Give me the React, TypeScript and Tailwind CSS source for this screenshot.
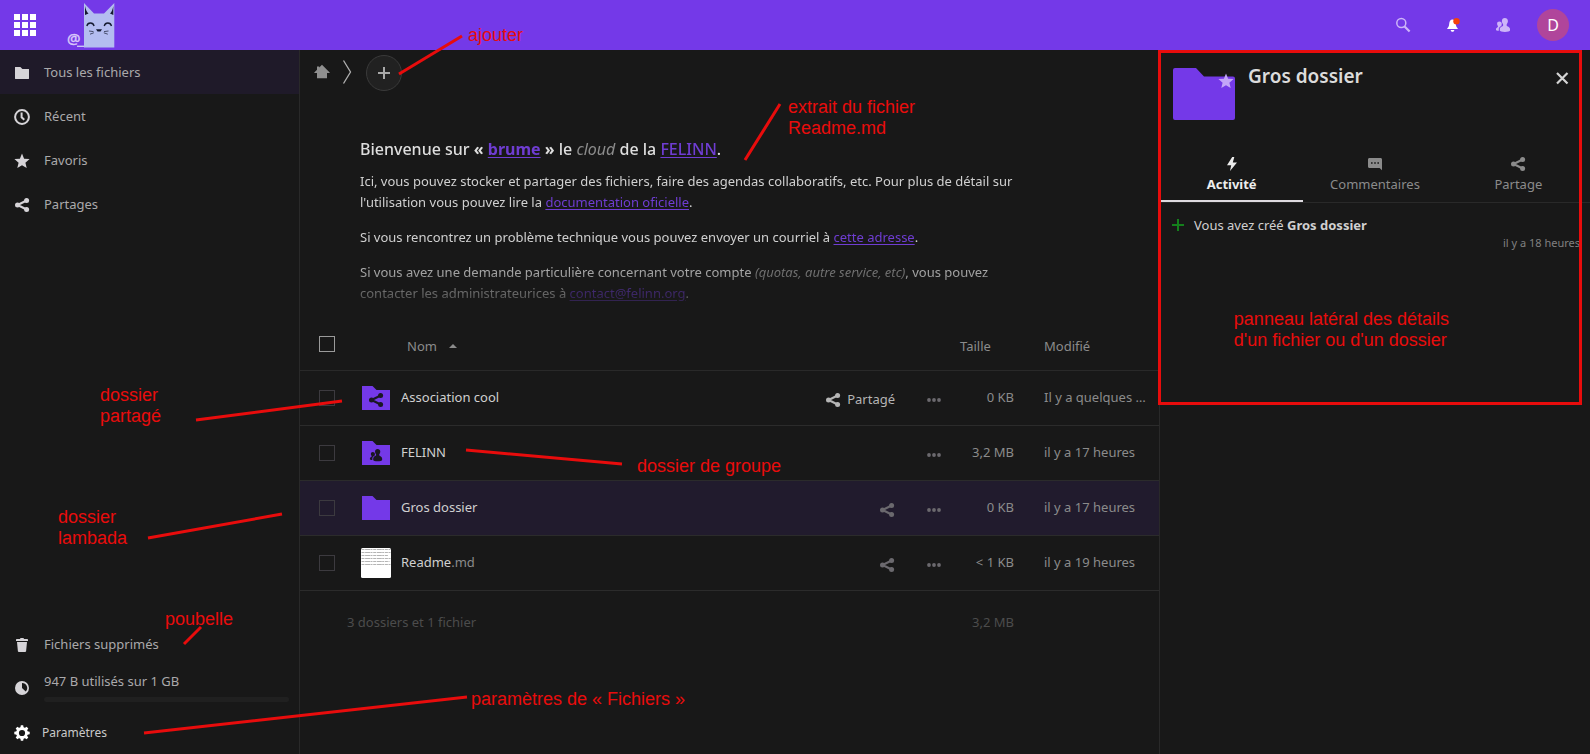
import type { ReactNode } from "react";

type IconProps = { className?: string };

function ShareIcon({ className = "size-4" }: IconProps) {
  return (
    <svg viewBox="0 0 16 16" className={className} fill="currentColor" aria-hidden="true">
      <path d="M12.6 3.4 3.6 8l9 4.6" fill="none" stroke="currentColor" strokeWidth="2.2" />
      <circle cx="12.6" cy="3.400" r="2.500" />
      <circle cx="3.500" cy="8" r="2.500" />
      <circle cx="12.6" cy="12.600" r="2.500" />
    </svg>
  );
}

function StarIcon({ className = "size-4" }: IconProps) {
  return (
    <svg viewBox="0 0 16 16" className={className} fill="currentColor" aria-hidden="true">
      <path d="m8 .6 2.1 5.100 5.500.4-4.200 3.600 1.300 5.400L8 12.200l-4.700 2.900 1.300-5.400L.4 6.100l5.500-.4z" />
    </svg>
  );
}

function FolderSmallIcon({ className = "size-4" }: IconProps) {
  return (
    <svg viewBox="0 0 16 16" className={className} fill="currentColor" aria-hidden="true">
      <path d="M1.400 2h5l2 2h6.200c.3 0 .4.2.4.4v9.200c0 .2-.1.4-.4.4H1.400c-.2 0-.4-.2-.4-.4V2.400c0-.2.2-.4.4-.4z" />
    </svg>
  );
}

function ClockIcon({ className = "size-4" }: IconProps) {
  return (
    <svg viewBox="0 0 16 16" className={className} fill="none" stroke="currentColor" aria-hidden="true">
      <circle cx="8" cy="8" r="6.900" strokeWidth="2" />
      <path d="M7.600 3.600v4.600l2.700 2.500" strokeWidth="2" />
    </svg>
  );
}

function TrashIcon({ className = "size-4" }: IconProps) {
  return (
    <svg viewBox="0 0 16 16" className={className} fill="currentColor" aria-hidden="true">
      <path d="M6.500 1 6 2H3c-.6 0-1 .4-1 1v1h12V3c0-.6-.4-1-1-1h-3l-.5-1zM3 5l.9 9.200c.1.500.5.800 1 .8h6.200c.5 0 .9-.3 1-.8L13 5z" />
    </svg>
  );
}

function QuotaIcon({ className = "size-4" }: IconProps) {
  return (
    <svg viewBox="0 0 16 16" className={className} fill="currentColor" aria-hidden="true">
      <path
        fillRule="evenodd"
        d="M8 1a7 7 0 1 0 0 14A7 7 0 0 0 8 1zm0 1.900A5.100 5.100 0 0 1 11.700 11.600L8 8z"
      />
    </svg>
  );
}

const gearTeeth = [0, 45, 90, 135, 180, 225, 270, 315];

function GearIcon({ className = "size-4" }: IconProps) {
  return (
    <svg viewBox="0 0 16 16" className={className} fill="currentColor" aria-hidden="true">
      <circle cx="8" cy="8" r="4.500" fill="none" stroke="currentColor" strokeWidth="2.800" />
      {gearTeeth.map((angle) => (
        <path key={angle} d="M6.300 3 6.800.3h2.400L9.700 3z" transform={`rotate(${angle} 8 8)`} />
      ))}
    </svg>
  );
}

function HomeIcon({ className = "size-4" }: IconProps) {
  return (
    <svg viewBox="0 0 16 16" className={className} fill="currentColor" aria-hidden="true">
      <path d="M8 .8 5.200 3.600V2.400H3v3.400L.3 8.600V9H3v5.200h10V9h2.700v-.4z" />
    </svg>
  );
}

function PeopleIcon({ className = "size-4" }: IconProps) {
  return (
    <svg viewBox="0 0 16 16" className={className} fill="currentColor" aria-hidden="true">
      <path d="M9.800 1C8 1 6.900 2.300 6.900 4.100c0 1.200.5 2.400 1.200 3.100v1.500c-.3.500-3.300 1-3.300 3.300v1.600c0 .9 2.400 1.400 5.100 1.400s5.100-.5 5.100-1.400V12c0-2.200-3-2.800-3.300-3.300V7.200c.7-.7 1.200-1.900 1.200-3.100C12.900 2.300 11.600 1 9.800 1z" />
      <path d="M4.300 4.600c-1.300 0-2.200.9-2.200 2.200 0 .8.300 1.600.8 2.100v1c-.2.400-1.900.8-1.900 2.100v.9c0 .5 1 .8 2.800.9V12c0-1.600 1.200-2.500 2.500-3.100.1-.5.500-1.200.5-2.100 0-1.300-1.200-2.200-2.500-2.200z" />
    </svg>
  );
}

function SearchIcon({ className = "size-4" }: IconProps) {
  return (
    <svg viewBox="0 0 16 16" className={className} fill="none" stroke="currentColor" aria-hidden="true">
      <circle cx="6.300" cy="6" r="4.500" strokeWidth="1.500" />
      <path d="m9.600 9.500 5 5" strokeWidth="2.200" />
    </svg>
  );
}

function BellIcon({ className = "size-4" }: IconProps) {
  return (
    <svg viewBox="0 0 16 16" className={className} aria-hidden="true">
      <path
        d="M7 2.600C5 3.100 4.500 4.800 4.200 6.800 4 9 3.600 9.600 3.200 10.200c-.5.600-1 1-1 1.800h10.600c0-.8-.5-1.200-1-1.800-.4-.6-.8-1.200-1-3.400-.2-2-.8-3.700-3-4.200zM5.700 12.900c0 .9.800 1.800 1.800 1.800s1.800-.9 1.800-1.800z"
        fill="#fff"
      />
      <circle cx="11.500" cy="4.200" r="3.200" fill="#f4410a" />
    </svg>
  );
}

function BoltIcon({ className = "size-4" }: IconProps) {
  return (
    <svg viewBox="0 0 16 16" className={className} fill="currentColor" aria-hidden="true">
      <path d="M8.200 1 3 9.300h4.200L6 15l7-8.400H8.800L10.300 1z" />
    </svg>
  );
}

function CommentIcon({ className = "size-4" }: IconProps) {
  return (
    <svg viewBox="0 0 16 16" className={className} fill="currentColor" aria-hidden="true">
      <path
        fillRule="evenodd"
        d="M2.500 2h11c.9 0 1.500.6 1.500 1.500v10.700L12.600 12H2.500C1.600 12 1 11.400 1 10.500v-7C1 2.600 1.600 2 2.500 2zM4 6.200v1.600h1.600V6.200zm3.200 0v1.600h1.600V6.200zm3.200 0v1.600H12V6.200z"
      />
    </svg>
  );
}

function PlusIcon({ className = "size-4" }: IconProps) {
  return (
    <svg viewBox="0 0 16 16" className={className} stroke="currentColor" strokeWidth="2" aria-hidden="true">
      <path d="M8 2v12M2 8h12" />
    </svg>
  );
}

function DotsIcon() {
  return (
    <svg viewBox="0 0 16 16" className="size-4" fill="currentColor" aria-hidden="true">
      <circle cx="3" cy="8" r="1.900" />
      <circle cx="8" cy="8" r="1.900" />
      <circle cx="13" cy="8" r="1.900" />
    </svg>
  );
}

function FolderThumb({ children }: { children?: ReactNode }) {
  return (
    <span className="grid size-8 shrink-0 place-items-center text-[#1a1722]">
      <svg viewBox="0 0 32 32" className="col-start-1 row-start-1 size-8" aria-hidden="true">
        <path d="M2 4h10.500l4 4H30v20H2z" fill="#7439e8" />
      </svg>
      <span className="col-start-1 row-start-1 mt-1">{children}</span>
    </span>
  );
}

function ReadmeThumb() {
  return (
    <svg viewBox="0 0 32 32" className="size-8 shrink-0" aria-hidden="true">
      <rect x="1" y="1" width="30" height="30" rx="1.500" fill="#fff" />
      <path
        d="M1.500 2.500h29M1.500 5.500h29M1.500 8.500h27M1.500 11.500h29M1.500 14.500h28M1.500 17.500h29"
        stroke="#b4b4b4"
        strokeWidth="1"
        strokeDasharray="3 .6 5 .4 2 .7"
      />
    </svg>
  );
}

function CatLogo() {
  return (
    <svg viewBox="0 0 52 50" className="h-[50px] w-[52px]" aria-hidden="true">
      <text x="1" y="44" fontSize="15" fill="#d9c8fb" stroke="#d9c8fb" strokeWidth=".4">
        @
      </text>
      <path d="M11 46.300h8" stroke="#c9c4f6" strokeWidth="1.400" />
      <path d="M18 3l10 10.500h10L48.300 3v44.400H18z" fill="#b4bdf0" />
      <path d="M19 6c.6 3 1.800 6.500 3.500 7.500L19 15zM47.300 6c-.5 3-1.600 6.500-3.300 7.500l3.300 1.500z" fill="#151a30" />
      <g fill="none" stroke="#151a30">
        <path d="M20.800 26c1-4 6.300-4 7.300 0M38.200 26c1-4 6.300-4 7.300 0" strokeWidth="1.300" />
        <path d="M23 31l4.500.6M24 34.200l3.800-1.400M42.500 31l-4.500.6M41.800 34.200l-4-1.400" strokeWidth=".7" />
      </g>
      <path d="M30 29.300h6l-1.500 2.200h-3z" fill="#151a30" />
    </svg>
  );
}

function Header() {
  return (
    <header className="flex h-[50px] items-center bg-[#7439e8] pr-[21px] pl-3.5">
      <a href="#apps" aria-label="Applications">
        <svg viewBox="0 0 22 22" className="size-[22px]" fill="#fff" aria-hidden="true">
          {[0, 8, 16].map((y) => [0, 8, 16].map((x) => <rect key={`${x}-${y}`} x={x} y={y} width="6" height="6" />))}
        </svg>
      </a>
      <a href="#home" aria-label="Brume" className="ml-[30px]">
        <CatLogo />
      </a>
      <div className="ml-auto flex items-center gap-[34px] text-[#cdb5f8]">
        <button type="button" aria-label="Rechercher"><SearchIcon /></button>
        <button type="button" aria-label="Notifications"><BellIcon /></button>
        <button type="button" aria-label="Contacts"><PeopleIcon /></button>
        <button
          type="button"
          aria-label="Compte"
          className="-ml-2 flex size-8 items-center justify-center rounded-full bg-[#b0459b] text-base text-white"
        >
          D
        </button>
      </div>
    </header>
  );
}

function NavItem({ icon, label, active = false }: { icon: ReactNode; label: string; active?: boolean }) {
  return (
    <a
      href={`#${label}`}
      className={`flex h-11 items-center gap-3.5 pt-0.5 pl-3.5 ${active ? "bg-[#1f1a29]" : ""}`}
    >
      <span className="text-[#d6d4d8]">{icon}</span>
      {label}
    </a>
  );
}

function Sidebar() {
  return (
    <nav className="flex w-[300px] shrink-0 flex-col border-r border-[#292929] text-[#aaa9ab]">
      <NavItem icon={<FolderSmallIcon />} label="Tous les fichiers" active />
      <NavItem icon={<ClockIcon />} label="Récent" />
      <NavItem icon={<StarIcon />} label="Favoris" />
      <NavItem icon={<ShareIcon />} label="Partages" />
      <div className="mt-auto">
        <NavItem icon={<TrashIcon />} label="Fichiers supprimés" />
        <div className="flex h-11 items-center gap-3.5 pr-2.5 pl-3.5">
          <span className="text-[#d6d4d8]"><QuotaIcon /></span>
          <div className="flex-1 pb-1">
            <p id="quota-label" className="leading-5">947 B utilisés sur 1 GB</p>
            <div
              role="progressbar"
              aria-labelledby="quota-label"
              aria-valuenow={0}
              className="mt-1.5 h-[5px] rounded-full bg-[#202020]"
            />
          </div>
        </div>
        <button type="button" className="flex h-11 w-full items-center gap-3 pt-0.5 pl-3.5 text-xs text-[#c9c9c9]">
          <span className="text-white"><GearIcon /></span>
          Paramètres
        </button>
      </div>
    </nav>
  );
}

function TextLink({ href, children }: { href: string; children: ReactNode }) {
  return (
    <a href={href} className="text-[#6f3dd2] underline underline-offset-2">
      {children}
    </a>
  );
}

function Readme() {
  return (
    <section className="mt-[43px] max-w-[800px] space-y-3.5 px-[60px] leading-[21px] text-[#d0d0d0] [mask-image:linear-gradient(to_bottom,#000_72%,rgb(0_0_0/0.25)_100%)]">
      <h1 className="mb-2.5 text-base leading-6 font-medium text-[#dedede]">
        Bienvenue sur{" "}
        <strong>
          « <TextLink href="#brume">brume</TextLink> »
        </strong>{" "}
        le <em className="font-normal text-[#8c8c8c]">cloud</em> de la <TextLink href="#felinn">FELINN</TextLink>.
      </h1>
      <p>
        Ici, vous pouvez stocker et partager des fichiers, faire des agendas collaboratifs, etc. Pour plus de détail sur
        l'utilisation vous pouvez lire la <TextLink href="#documentation">documentation oficielle</TextLink>.
      </p>
      <p>
        Si vous rencontrez un problème technique vous pouvez envoyer un courriel à{" "}
        <TextLink href="#adresse">cette adresse</TextLink>.
      </p>
      <p>
        Si vous avez une demande particulière concernant votre compte{" "}
        <em className="text-[#8c8c8c]">(quotas, autre service, etc)</em>, vous pouvez contacter les administrateurices à{" "}
        <TextLink href="mailto:contact@felinn.org">contact@felinn.org</TextLink>.
      </p>
    </section>
  );
}

type Row = {
  name: string;
  ext?: string;
  thumb: ReactNode;
  share: "shared" | "none" | "available";
  size: string;
  modified: string;
  selected?: boolean;
};

const rows: Row[] = [
  {
    name: "Association cool",
    thumb: <FolderThumb><ShareIcon /></FolderThumb>,
    share: "shared",
    size: "0 KB",
    modified: "Il y a quelques secondes",
  },
  {
    name: "FELINN",
    thumb: <FolderThumb><PeopleIcon className="size-3.5" /></FolderThumb>,
    share: "none",
    size: "3,2 MB",
    modified: "il y a 17 heures",
  },
  {
    name: "Gros dossier",
    thumb: <FolderThumb />,
    share: "available",
    size: "0 KB",
    modified: "il y a 17 heures",
    selected: true,
  },
  {
    name: "Readme",
    ext: ".md",
    thumb: <ReadmeThumb />,
    share: "available",
    size: "< 1 KB",
    modified: "il y a 19 heures",
  },
];

function FileTable() {
  return (
    <table className="w-full table-fixed border-collapse text-left text-[#8b8b8b]">
      <colgroup>
        <col className="w-[52px]" />
        <col />
        <col className="w-20" />
        <col className="w-[131px]" />
      </colgroup>
      <thead>
        <tr className="h-[55px] border-b border-[#292929]">
          <th className="pt-1 pl-[19px]">
            <input
              type="checkbox"
              aria-label="Tout sélectionner"
              className="block size-4 appearance-none border border-[#9a9a9a]"
            />
          </th>
          <th className="pt-2 pl-[55px] font-normal">
            <button type="button" className="flex items-center gap-3">
              Nom
              <svg viewBox="0 0 8 4" className="h-1 w-2" fill="currentColor" aria-hidden="true">
                <path d="M0 4 4 0l4 4z" />
              </svg>
            </button>
          </th>
          <th className="pt-2 pl-3 font-normal">
            <button type="button">Taille</button>
          </th>
          <th className="pt-2 pl-4 font-normal">
            <button type="button">Modifié</button>
          </th>
        </tr>
      </thead>
      <tbody>
        {rows.map((row) => (
          <tr key={row.name} className={`h-[55px] border-b border-[#2b2b2b] ${row.selected ? "bg-[#211b2d]" : ""}`}>
            <td className="pl-[19px]">
              <input
                type="checkbox"
                aria-label={`Sélectionner ${row.name}`}
                className="block size-4 appearance-none border border-[#3c3a3f]"
              />
            </td>
            <td className="pl-2">
              <div className="flex items-center">
                {row.thumb}
                <a href={`#${row.name}`} className="ml-[9px] text-[#d0d0d0]">
                  {row.name}
                  <span className="text-[#8b8b8b]">{row.ext}</span>
                </a>
                <div className="mt-1 ml-auto flex items-center text-[#6b696e]">
                  {row.share === "shared" && (
                    <button type="button" className="flex items-center gap-1.5 text-[#b5b5b5]">
                      <ShareIcon />
                      Partagé
                    </button>
                  )}
                  {row.share === "available" && (
                    <button type="button" aria-label="Partager"><ShareIcon /></button>
                  )}
                  <button type="button" aria-label="Actions" className="ml-[25px] flex w-7 justify-center">
                    <DotsIcon />
                  </button>
                </div>
              </div>
            </td>
            <td className="pr-3.5 text-right">{row.size}</td>
            <td className="truncate pr-2 pl-4">{row.modified}</td>
          </tr>
        ))}
      </tbody>
      <tfoot>
        <tr className="h-16 text-[#4c4c4c]">
          <td colSpan={2} className="pl-[47px]">3 dossiers et 1 fichier</td>
          <td className="pr-3.5 text-right">3,2 MB</td>
          <td />
        </tr>
      </tfoot>
    </table>
  );
}

function Files() {
  return (
    <main className="min-w-0 flex-1">
      <div className="flex h-11 items-center pl-[14px] text-[#8f8f8f]">
        <a href="#racine" aria-label="Accueil"><HomeIcon /></a>
        <svg viewBox="0 0 10 24" className="ml-3 h-6 w-2.5" fill="none" stroke="#b0b0b0" aria-hidden="true">
          <path d="M1.500.5 8.500 12l-7 11.500" strokeWidth="1.300" />
        </svg>
        <button
          type="button"
          aria-label="Ajouter"
          className="mt-0.5 ml-3.5 flex size-9 items-center justify-center rounded-full border border-[#3a3a3a] bg-[#212121] text-[#a8a8a8]"
        >
          <PlusIcon />
        </button>
      </div>
      <Readme />
      <div className="mt-[11px]">
        <FileTable />
      </div>
    </main>
  );
}

function Tab({ icon, label, active = false }: { icon: ReactNode; label: string; active?: boolean }) {
  return (
    <button
      type="button"
      role="tab"
      aria-selected={active}
      className={`flex flex-1 flex-col items-center gap-0.5 border-b-2 pb-1.5 leading-5 ${
        active ? "border-[#dedbe0] font-bold text-[#ededed]" : "border-transparent text-[#8b8b8b]"
      }`}
    >
      {icon}
      {label}
    </button>
  );
}

function Details() {
  return (
    <aside className="w-[431px] shrink-0 border-l border-[#292929]">
      <div className="flex h-[106px] items-start pt-3.5 pr-5 pl-[13px]">
        <div className="relative">
          <svg viewBox="0 0 62 60" className="h-[60px] w-[62px]" aria-hidden="true">
            <path
              d="M2 4h21l8 8.500h29a2 2 0 0 1 2 2V54a2 2 0 0 1-2 2H2a2 2 0 0 1-2-2V6a2 2 0 0 1 2-2z"
              fill="#7439e8"
            />
          </svg>
          <span className="absolute top-[9px] right-px text-[#c3a5f8]">
            <StarIcon />
          </span>
        </div>
        <h2 className="ml-[13px] text-[19px] leading-6 font-semibold text-[#dcdcdc]">Gros dossier</h2>
        <button type="button" aria-label="Fermer" className="mt-1.5 ml-auto text-[#d4d4d4]">
          <svg viewBox="0 0 16 16" className="size-4" stroke="currentColor" strokeWidth="2.200" aria-hidden="true">
            <path d="m3 3 10.500 10.500M13.500 3 3 13.500" />
          </svg>
        </button>
      </div>
      <div role="tablist" className="flex border-b border-[#292929]">
        <Tab icon={<BoltIcon />} label="Activité" active />
        <Tab icon={<CommentIcon />} label="Commentaires" />
        <Tab icon={<ShareIcon />} label="Partage" />
      </div>
      <div className="pt-3 pr-2.5 pl-2.5">
        <p className="flex items-center gap-2 leading-5 text-[#d0d0d0]">
          <PlusIcon className="size-4 text-[#14801c]" />
          <span>
            Vous avez créé <strong>Gros dossier</strong>
          </span>
        </p>
        <p className="text-right text-[11px] leading-4 text-[#808080]">il y a 18 heures</p>
      </div>
    </aside>
  );
}

function Note({ className, children }: { className: string; children: ReactNode }) {
  return <p className={`absolute whitespace-pre ${className}`}>{children}</p>;
}

function Annotations() {
  return (
    <div className="pointer-events-none absolute inset-0 font-['Liberation_Sans',sans-serif] text-lg leading-[21px] text-[#e80c0c]">
      <svg className="absolute inset-0 size-full" fill="none" stroke="#e80c0c" strokeWidth="3" aria-hidden="true">
        <path d="M399 74 462 36M780 104 745 160M196 420 342 401M148 538 282 514M466 450 622 464M184 644 201 627M144 733 467 697" />
      </svg>
      <div className="absolute top-[50px] right-2 h-[355px] w-[424px] border-[3px] border-[#e80c0c]" />
      <Note className="top-[25px] left-[468px]">ajouter</Note>
      <Note className="top-[97px] left-[788px]">{"extrait du fichier\nReadme.md"}</Note>
      <Note className="top-[385px] left-[100px]">{"dossier\npartagé"}</Note>
      <Note className="top-[507px] left-[58px]">{"dossier\nlambada"}</Note>
      <Note className="top-[456px] left-[637px]">dossier de groupe</Note>
      <Note className="top-[609px] left-[165px]">poubelle</Note>
      <Note className="top-[689px] left-[471px]">paramètres de « Fichiers »</Note>
      <Note className="top-[309px] right-[141px]">{"panneau latéral des détails\nd'un fichier ou d'un dossier"}</Note>
    </div>
  );
}

export default function App() {
  return (
    <div className="relative flex min-h-screen flex-col bg-[#181818] font-['Noto_Sans',sans-serif] text-[13px]">
      <Header />
      <div className="flex flex-1">
        <Sidebar />
        <Files />
        <Details />
      </div>
      <Annotations />
    </div>
  );
}
